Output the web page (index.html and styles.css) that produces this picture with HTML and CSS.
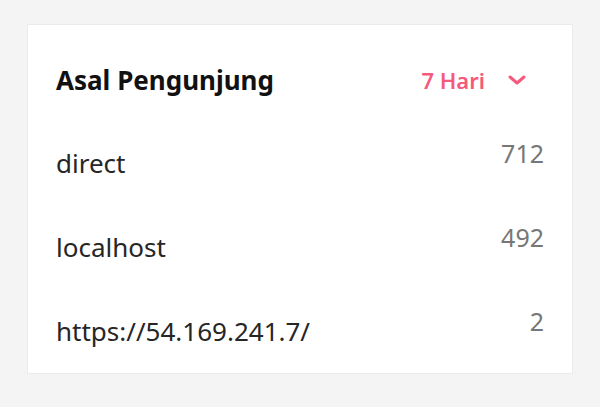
FILE: index.html
```html
<!DOCTYPE html>
<html>
  <head>
    <meta name="viewport" content="width=device-width, initial-scale=1.0" />
    <title>Asal Pengunjung</title>
    <link rel="stylesheet" href="styles.css">
  </head>

  <body>
    <div class="card">
      <div class="card-header">
        <h3 class="card-title">Asal Pengunjung</h3>
        <!-- range picker -->
        <div class="range-select">
          <span>7 Hari</span>
          <svg class="chevron" width="18" height="10" viewBox="0 0 18 10">
            <path d="M2 2 L9 8 L16 2" fill="none" stroke="currentColor" stroke-width="3" stroke-linecap="round" stroke-linejoin="round" />
          </svg>
        </div>
      </div>

      <ul class="source-list">
        <li class="source-row">
          <span class="source-name">direct</span>
          <span class="source-count">712</span>
        </li>
        <li class="source-row">
          <span class="source-name">localhost</span>
          <span class="source-count">492</span>
        </li>
        <li class="source-row">
          <span class="source-name">https://54.169.241.7/</span>
          <span class="source-count">2</span>
        </li>
      </ul>
    </div>
  </body>
</html>
```

FILE: styles.css
```css
body,
html {
  margin: 0;
  padding: 0;
  height: 100%;
  width: 100%;
}

body {
  background: #f4f4f4;
  font-family: "Noto Sans", "Open Sans", sans-serif;
  padding: 24px 27px 0;
  box-sizing: border-box;
}

.card {
  width: 546px;
  height: 350px;
  box-sizing: border-box;
  background: #fff;
  border: 1px solid #ebebeb;
  padding: 38px 28px 0;
}

.card-header {
  display: flex;
  align-items: center;
  justify-content: space-between;
  height: 34px;
}

.card-title {
  margin: 0;
  font-size: 26px;
  font-weight: 700;
  color: #111;
}

.range-select {
  display: flex;
  align-items: center;
  gap: 23px;
  margin-right: 18px;
  color: #f5597b;
  font-size: 22px;
  font-weight: 600;
}

.chevron {
  display: block;
}

.source-list {
  list-style: none;
  margin: 24px 0 0;
  padding: 0;
}

.source-row {
  display: flex;
  justify-content: space-between;
  align-items: flex-start;
  height: 84px;
}

.source-name {
  padding-top: 24px;
  line-height: 36px;
  font-size: 26px;
  color: #262626;
}

.source-count {
  padding-top: 14px;
  line-height: 36px;
  font-size: 25px;
  color: #777;
}
```
